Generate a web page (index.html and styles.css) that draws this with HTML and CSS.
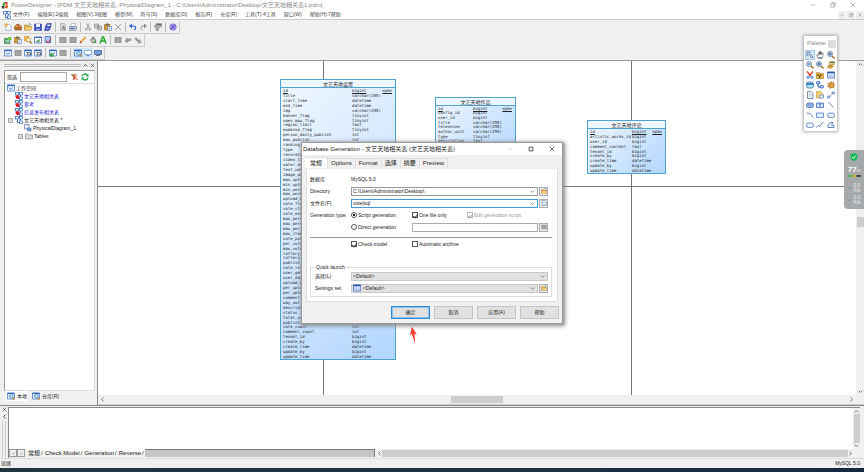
FILE: index.html
```html
<!DOCTYPE html>
<html lang="zh-CN">
<head>
<meta charset="utf-8">
<meta name="viewport" content="width=device-width, initial-scale=1">
<title>PowerDesigner</title>
<link rel="stylesheet" href="styles.css">
</head>
<body>
<svg class="sprite" aria-hidden="true">
  <symbol id="logo" viewBox="0 0 16 16"><path d="M2 9l3-7 4 3-2 5z" fill="#4aa84a"/><path d="M6 2h7v7l-3-2z" fill="#d8392f"/><path d="M9 8l5 1-1 6-5-1z" fill="#e0532f"/><path d="M1 10h6v5H2z" fill="#444"/></symbol>
  <symbol id="model" viewBox="0 0 16 16"><path d="M5 4v9h7M11 4v5" fill="none" stroke="#4b77b8" stroke-width="2"/><g fill="#fff" stroke="#2f66b5" stroke-width="1.4"><rect x="1" y="1" width="6" height="5"/><rect x="9" y="1" width="6" height="5"/><rect x="9" y="10" width="6" height="5"/></g></symbol>
  <symbol id="modelred" viewBox="0 0 16 16"><use href="#model"/><circle cx="5" cy="10" r="4" fill="#e01b1b"/></symbol>
  <symbol id="new" viewBox="0 0 16 16"><path d="M4 3h7l3 3v9H4z" fill="#fff" stroke="#667fa8"/><path d="M4 0v8M0 4h8M1 1l6 6M7 1L1 7" stroke="#e8a72a" stroke-width="1.5"/></symbol>
  <symbol id="box" viewBox="0 0 16 16"><path d="M1 6l7-4 7 4v8H2z" fill="#b5692a" stroke="#6e3c14"/><path d="M1 6h14" stroke="#f3c66b" stroke-width="2"/><path d="M6 3l4 4" stroke="#d33" stroke-width="2"/></symbol>
  <symbol id="folder" viewBox="0 0 16 16"><path d="M1 4h5l2 2h6v8H1z" fill="#eab54a" stroke="#a0721d"/><path d="M4 8h12l-3 6H1z" fill="#ffe08a" stroke="#b98622"/><path d="M9 3c2-3 5-1 5 1" fill="none" stroke="#3867b4" stroke-width="1.5"/></symbol>
  <symbol id="save" viewBox="0 0 16 16"><path d="M1 2h14v13H1z" fill="#3b4fc4" stroke="#22307e"/><path d="M4 2h8v6H4z" fill="#e8edff"/><path d="M5 11h6v4H5z" fill="#aab4ea"/></symbol>
  <symbol id="saveall" viewBox="0 0 16 16"><path d="M6 1h9l-3 11-2 3H1l3-11z" fill="#3b4fc4" stroke="#22307e"/><path d="M7 3h6l-1 3H6z" fill="#e8edff"/><path d="M5 9h5l-1 4H4z" fill="#8794e2"/></symbol>
  <symbol id="preview" viewBox="0 0 16 16"><path d="M3 1h8l2 3v11H3z" fill="#ddd" stroke="#888"/><path d="M5 12l4-8 5 10z" fill="#8a8a8a"/></symbol>
  <symbol id="print" viewBox="0 0 16 16"><path d="M5 1h8l-2 6H3z" fill="#fff" stroke="#7d8da6"/><path d="M1 7h14v6l-3 2H1z" fill="#b7c8e0" stroke="#526789"/><path d="M3 11h8" stroke="#345" stroke-width="1.5"/></symbol>
  <symbol id="cut" viewBox="0 0 16 16"><path d="M5 1l5 9M11 1L6 10" stroke="#888" stroke-width="1.6"/><g fill="none" stroke="#888" stroke-width="1.6"><circle cx="4.500" cy="12.500" r="2"/><circle cx="11.500" cy="12.500" r="2"/></g></symbol>
  <symbol id="redcut" viewBox="0 0 16 16"><path d="M2 1l8 9M14 1L6 10" stroke="#e03a2a" stroke-width="2.4"/><g fill="none" stroke="#2a80d8" stroke-width="2"><circle cx="4" cy="12.500" r="2.200"/><circle cx="12" cy="12.500" r="2.200"/></g></symbol>
  <symbol id="copy" viewBox="0 0 16 16"><g fill="#d5d5d5" stroke="#888" stroke-width="1.4"><path d="M1 2h8v8H1zM7 6h8v8H7z"/></g><path d="M9 9h4M9 11h4M3 5h4" stroke="#888"/></symbol>
  <symbol id="paste" viewBox="0 0 16 16"><path d="M1 3h11v11H1z" fill="#d79a2c" stroke="#7c5514"/><path d="M4 1h5v4H4z" fill="#666"/><path d="M7 7h8v8H7z" fill="#fff" stroke="#3c62b0"/><path d="M9 10h4M9 12h4" stroke="#3c62b0"/></symbol>
  <symbol id="del" viewBox="0 0 16 16"><path d="M2 2l12 12M14 2L2 14" stroke="#8a8a8a" stroke-width="1.6"/></symbol>
  <symbol id="undo" viewBox="0 0 16 16"><path d="M3 6h6c6 0 5 7 1 8" fill="none" stroke="#2f62d0" stroke-width="2.4"/><path d="M0 6l6-5v10z" fill="#2f62d0"/></symbol>
  <symbol id="redo" viewBox="0 0 16 16"><path d="M13 6H8c-6 0-5 7-1 8" fill="none" stroke="#8c8c8c" stroke-width="2"/><path d="M16 6l-6-5v10z" fill="#8c8c8c"/></symbol>
  <symbol id="props" viewBox="0 0 16 16"><path d="M4 1h11v7H9v7H4V8H1V5h3z" fill="#aaa" stroke="#777"/><path d="M5 3h10" stroke="#666" stroke-width="2"/></symbol>
  <symbol id="help" viewBox="0 0 16 16"><circle cx="8" cy="8" r="7" fill="#7d6cd8"/><path d="M8 1v14M1 8h14M3 3l10 10" stroke="#d9d3ff"/><circle cx="8" cy="8" r="2" fill="#4530b8"/></symbol>
  <symbol id="green" viewBox="0 0 16 16"><path d="M1 5h11v10H1z" fill="#49a35a" stroke="#23653a"/><path d="M3 9h8M3 12h8" stroke="#cfe9ff" stroke-width="1.5"/><path d="M8 2h7v6H8z" fill="#75c24d"/></symbol>
  <symbol id="find" viewBox="0 0 16 16"><path d="M1 1h9l-2 9H1z" fill="#f5c04c" stroke="#b27a1a"/><circle cx="9" cy="8" r="4" fill="#fff" stroke="#ce8a1c" stroke-width="1.500"/><path d="M11 11l4 4" stroke="#9c6a1a" stroke-width="2.500"/></symbol>
  <symbol id="image" viewBox="0 0 16 16"><path d="M1 2h14v12H1z" fill="#fff" stroke="#3462b8" stroke-width="1.500"/><path d="M1 3h14" stroke="#3462b8" stroke-width="2"/><path d="M3 12l8-6v6z" fill="#37963d"/></symbol>
  <symbol id="check" viewBox="0 0 16 16"><path d="M2 1h11v12H2z" fill="#a9c6f2" stroke="#3f6dbe" stroke-width="1.500"/><path d="M5 9l3 5 6-9" fill="none" stroke="#db3030" stroke-width="2"/><path d="M8 15l6-2V8z" fill="#3f6dbe"/></symbol>
  <symbol id="gray" viewBox="0 0 16 16"><path d="M1 2h14v12H1z" fill="#999"/><path d="M4 6h8M4 9h8M4 12h5" stroke="#bbb"/></symbol>
  <symbol id="pencil" viewBox="0 0 16 16"><path d="M1 15l2-5L12 1l3 2-9 9z" fill="#e4a52b"/><path d="M1 15l2-5 3 3z" fill="#d23a2a"/></symbol>
  <symbol id="fill" viewBox="0 0 16 16"><path d="M3 8l6-6 5 7-6 5z" fill="#ccc" stroke="#333" stroke-width="1.300"/><path d="M8 1v7" stroke="#333"/><path d="M12 8l3 5-4 2z" fill="#2b9a3a"/></symbol>
  <symbol id="font" viewBox="0 0 16 16"><path d="M2 15L7 2h2l5 13M4 10h8" fill="none" stroke="#19ad2d" stroke-width="3"/></symbol>
  <symbol id="arrowg" viewBox="0 0 16 16"><path d="M1 11l5-8 2 3 6-2 1 5-6 2-2 3z" fill="#999"/></symbol>
  <symbol id="arrowh" viewBox="0 0 16 16"><path d="M1 3l5 1 3 4 3-2 3 8-8 1 1-3-5-4z" fill="#999"/></symbol>
  <symbol id="frame" viewBox="0 0 16 16"><path d="M1 2h14v12H1z" fill="#edf5ff" stroke="#4d7dc6" stroke-width="1.600"/><path d="M1 3h14" stroke="#2f62b8" stroke-width="2.500"/><path d="M4 7l3 4 5-4" fill="none" stroke="#2f62b8" stroke-width="1.500"/></symbol>
  <symbol id="frames" viewBox="0 0 16 16"><path d="M1 2h14v12H1z" fill="#edf5ff" stroke="#4d7dc6" stroke-width="1.600"/><path d="M1 3h14" stroke="#2f62b8" stroke-width="2.500"/><path d="M5 7h3v5H5M10 7h3v5h-3" fill="none" stroke="#333" stroke-width="1.500"/></symbol>
  <symbol id="greenframe" viewBox="0 0 16 16"><use href="#frame"/><path d="M1 9h8v6H1z" fill="#3ca447"/></symbol>
  <symbol id="screen" viewBox="0 0 16 16"><path d="M1 3h14v8H1z" fill="#fff" stroke="#7da0cf" stroke-width="1.500"/><path d="M5 13h6" stroke="#5b86bf" stroke-width="2"/></symbol>
  <symbol id="screenblue" viewBox="0 0 16 16"><path d="M1 3h14v8H1z" fill="#7ca0dc" stroke="#3b5c96" stroke-width="1.500"/><path d="M4 13h8" stroke="#777" stroke-width="2"/></symbol>
  <symbol id="browse" viewBox="0 0 16 16"><use href="#frame"/><circle cx="9" cy="9" r="3.500" fill="#cfe8fa" stroke="#277fb5" stroke-width="1.500"/><path d="M11 11l4 4" stroke="#c78324" stroke-width="2.500"/></symbol>
  <symbol id="pointer" viewBox="0 0 16 16"><path d="M2 2h6L7 5l7 7-2 2-7-7-3 2z" fill="#dceafa" stroke="#385170" stroke-width="1.300"/></symbol>
  <symbol id="hand" viewBox="0 0 16 16"><path d="M4 14L1 8l2-1 2 2V3h2v4-6h2v6-5h2v5l1-3h2v6l-2 5z" fill="#fff" stroke="#333"/><path d="M4 14h8" stroke="#3866a8" stroke-width="2"/></symbol>
  <symbol id="zoom" viewBox="0 0 16 16"><circle cx="6" cy="6" r="5" fill="#d9e9fb" stroke="#61758f" stroke-width="1.500"/><path d="M10 10l5 5" stroke="#a77524" stroke-width="3"/><path d="M3 6h6" stroke="#284f92" stroke-width="2"/></symbol>
  <symbol id="zoomplus" viewBox="0 0 16 16"><use href="#zoom"/><path d="M6 3v6" stroke="#284f92" stroke-width="2"/></symbol>
  <symbol id="handprop" viewBox="0 0 16 16"><path d="M5 1h10v6H5z" fill="#f1d56a" stroke="#8a742c"/><path d="M1 9l7-2 6 3-5 5H1z" fill="#c69a39"/><path d="M7 3h7" stroke="#3465aa" stroke-width="2"/></symbol>
  <symbol id="package" viewBox="0 0 16 16"><path d="M1 3h5l1 2h8v10H1z" fill="#e8b93d" stroke="#8d681a"/><path d="M3 7h3v3H3zM8 7h3v3H8zM6 11h3v3H6z" fill="#4b3515"/></symbol>
  <symbol id="table" viewBox="0 0 16 16"><path d="M1 2h14v12H1z" fill="#dce9ff" stroke="#3e64ae" stroke-width="1.400"/><path d="M1 3h14" stroke="#2c57ad" stroke-width="3"/><path d="M1 8h14M1 11h14M6 4v10" stroke="#93b2e4"/></symbol>
  <symbol id="view" viewBox="0 0 16 16"><rect x="1" y="2" width="14" height="12" rx="4" fill="#a8e1f2" stroke="#2c7aa6" stroke-width="1.500"/><path d="M1 6h14" stroke="#2765bd" stroke-width="3"/></symbol>
  <symbol id="ref" viewBox="0 0 16 16"><path d="M4 5v7h8" fill="none" stroke="#315cae" stroke-width="2"/><rect x="1" y="1" width="7" height="5" rx="2" fill="#9ac0f4" stroke="#315cae" stroke-width="1.500"/><rect x="8" y="9" width="7" height="5" rx="2" fill="#9ac0f4" stroke="#315cae" stroke-width="1.500"/></symbol>
  <symbol id="gear" viewBox="0 0 16 16"><path d="M8 1l2 3 4-1-1 4 3 2-3 2v3l-4-1-3 2-1-3-4-1 2-3-1-4 4 1z" fill="#dc9b38" stroke="#8d5718"/></symbol>
  <symbol id="file" viewBox="0 0 16 16"><path d="M3 1h7l4 4v10H3z" fill="#eaf1fb" stroke="#60758f" stroke-width="1.600"/><path d="M6 7h5M6 10h5" stroke="#9bacc4"/></symbol>
  <symbol id="note" viewBox="0 0 16 16"><path d="M1 1h8l5 6v7H1z" fill="#f8d471" stroke="#a77b25"/><path d="M7 8h8v6H7z" fill="#dbe6f8" stroke="#496ca7"/></symbol>
  <symbol id="link" viewBox="0 0 16 16"><path d="M4 12l8-8" stroke="#5875bd" stroke-width="1.500" stroke-dasharray="2 1"/><path d="M1 10h5v4H1zM10 2h5v4h-5z" fill="#b7c7ef" stroke="#4163b2"/></symbol>
  <symbol id="cyl" viewBox="0 0 16 16"><rect x="1" y="4" width="14" height="9" rx="4" fill="#9cbbf0" stroke="#375da9" stroke-width="1.500"/><path d="M4 8h8" stroke="#375da9"/></symbol>
  <symbol id="textbox" viewBox="0 0 16 16"><path d="M1 4h14v9H1z" fill="#d2e2ff" stroke="#375da9" stroke-width="1.500"/><path d="M8 5v7M5 6h6" stroke="#375da9" stroke-width="1.500"/></symbol>
  <symbol id="line" viewBox="0 0 16 16"><path d="M3 2l10 11" stroke="#4263a5" stroke-width="1.500"/></symbol>
  <symbol id="arc" viewBox="0 0 16 16"><path d="M1 4c6 0 11 3 13 9" fill="none" stroke="#4263a5" stroke-width="1.500"/></symbol>
  <symbol id="rect" viewBox="0 0 16 16"><path d="M1 4h14v9H1z" fill="#e5efff" stroke="#4a73c4" stroke-width="1.500"/></symbol>
  <symbol id="round" viewBox="0 0 16 16"><rect x="1" y="4" width="14" height="9" rx="4" fill="#e5efff" stroke="#4a73c4" stroke-width="1.500"/></symbol>
  <symbol id="poly" viewBox="0 0 16 16"><path d="M1 13l3-4 4 2 4-7 3-1" fill="none" stroke="#4263a5" stroke-width="1.500"/></symbol>
  <symbol id="polygon" viewBox="0 0 16 16"><path d="M2 13V8l4-5h6l-3 5 5 1v4z" fill="#e5efff" stroke="#4263a5" stroke-width="1.500"/></symbol>
  <symbol id="clearfilter" viewBox="0 0 16 16"><path d="M1 2h12L9 8v6l-3-2V8z" fill="#b98b58"/><path d="M6 5l9 9M14 5l-8 9" stroke="#e63222" stroke-width="2"/></symbol>
  <symbol id="refresh" viewBox="0 0 16 16"><path d="M2 7c1-6 8-6 10-3M14 9c-1 6-8 6-10 3" fill="none" stroke="#27a04a" stroke-width="2.600"/><path d="M15 1v6H9zM1 15V9h6z" fill="#27a04a"/></symbol>
  <symbol id="grayfolder" viewBox="0 0 16 16"><path d="M1 4h5l2 2h7v8H1z" fill="#ddd" stroke="#888" stroke-width="1.400"/></symbol>
  <symbol id="diagram" viewBox="0 0 16 16"><path d="M1 1h9v9H1z" fill="#e9f1ff" stroke="#667eaa" stroke-width="1.500"/><path d="M7 8h7v6H7z" fill="#79a9e2" stroke="#315c9d"/></symbol>
  <symbol id="min" viewBox="0 0 16 16"><path d="M2 8h12" stroke="currentColor" stroke-width="1.500"/></symbol>
  <symbol id="max" viewBox="0 0 16 16"><path d="M3 3h10v10H3z" fill="none" stroke="currentColor" stroke-width="2"/></symbol>
  <symbol id="restore" viewBox="0 0 16 16"><path d="M2 5h9v9H2zM5 5V2h9v9h-3" fill="none" stroke="currentColor" stroke-width="1.500"/></symbol>
  <symbol id="close" viewBox="0 0 16 16"><path d="M2 2l12 12M14 2L2 14" stroke="currentColor" stroke-width="1.700"/></symbol>
  <symbol id="down" viewBox="0 0 16 16"><path d="M2 5l6 6 6-6" fill="none" stroke="currentColor" stroke-width="2.500"/></symbol>
  <symbol id="up" viewBox="0 0 16 16"><path d="M2 11l6-6 6 6" fill="none" stroke="currentColor" stroke-width="2.500"/></symbol>
  <symbol id="left" viewBox="0 0 16 16"><path d="M11 2L5 8l6 6" fill="none" stroke="currentColor" stroke-width="2.500"/></symbol>
  <symbol id="right" viewBox="0 0 16 16"><path d="M5 2l6 6-6 6" fill="none" stroke="currentColor" stroke-width="2.500"/></symbol>
</svg>

<div class="app">
  <header class="titlebar">
    <svg class="icon"><use href="#logo"/></svg>
    <span class="grow">PowerDesigner - [PDM 文艺天地相关表, PhysicalDiagram_1 - C:\Users\Administrator\Desktop\文艺天地相关表1.pdm]</span>
    <div class="winbtns">
      <button aria-label="最小化"><svg><use href="#min"/></svg></button>
      <button aria-label="还原"><svg><use href="#restore"/></svg></button>
      <button aria-label="关闭"><svg><use href="#close"/></svg></button>
    </div>
  </header>
  <nav class="menubar">
    <svg class="icon"><use href="#model"/></svg>
    <div class="menus">
      <button>文件(F)</button><button>编辑(E):2编辑</button><button>视图(V):3视图</button><button>模型(M)</button><button>符号(S)</button><button>数据库(D)</button><button>报告(R)</button><button>仓库(R)</button><button>工具(T):4工具</button><button>窗口(W)</button><button>帮助(H):7帮助</button>
    </div>
    <div class="mdi">
      <button aria-label="最小化"><svg><use href="#min"/></svg></button>
      <button aria-label="还原"><svg><use href="#restore"/></svg></button>
      <button aria-label="关闭"><svg><use href="#close"/></svg></button>
    </div>
  </nav>
  <div class="toolbars" id="toolbars"></div>

  <main class="work">
    <aside class="browser">
      <div class="grip"><i></i><svg><use href="#up"/></svg><svg><use href="#close"/></svg></div>
      <div class="browser-box">
        <div class="filter">
          <label for="filter">筛选</label><input id="filter" type="text">
          <svg class="icon"><use href="#clearfilter"/></svg><svg class="icon"><use href="#refresh"/></svg>
        </div>
        <ul class="tree">
          <li><svg class="icon"><use href="#frame"/></svg>工作空间</li>
          <li class="l1 blue"><svg class="icon"><use href="#modelred"/></svg>文艺天地相关表</li>
          <li class="l1 blue"><svg class="icon"><use href="#modelred"/></svg>参考</li>
          <li class="l1 blue"><svg class="icon"><use href="#modelred"/></svg>信息发布相关表</li>
          <li><i class="exp"></i><svg class="icon"><use href="#model"/></svg>文艺天地相关表 *</li>
          <li class="l3"><svg class="icon"><use href="#diagram"/></svg>PhysicalDiagram_1</li>
          <li class="l2"><i class="exp"></i><svg class="icon"><use href="#grayfolder"/></svg>Tables</li>
        </ul>
      </div>
      <div class="browser-tabs">
        <button class="on"><svg class="icon"><use href="#browse"/></svg>本地</button>
        <button><svg class="icon"><use href="#browse"/></svg>仓库(R)</button>
      </div>
    </aside>
    <section class="canvas-wrap">
      <div class="canvas" id="canvas">
        <i class="guide v g1"></i><i class="guide v g2"></i><i class="guide h"></i>
      </div>
      <div class="vscroll"><svg><use href="#up"/></svg><i></i><svg><use href="#down"/></svg></div>
      <div class="hscroll"><svg><use href="#left"/></svg><i></i><svg><use href="#right"/></svg></div>
    </section>
  </main>

  <section class="output">
    <div class="output-grip"><svg><use href="#close"/></svg><svg><use href="#left"/></svg><i></i></div>
    <div class="output-main">
      <div class="output-body">
        <div class="output-text"></div>
        <div class="outscroll"><svg><use href="#up"/></svg><i></i><svg><use href="#down"/></svg></div>
      </div>
      <div class="output-tabs">
        <div class="steps"><button aria-label="上一个"><svg><use href="#left"/></svg></button><button aria-label="下一个"><svg><use href="#right"/></svg></button></div>
        <button class="otab">常规</button><button class="otab">Check Model</button><button class="otab">Generation</button><button class="otab">Reverse</button>
        <i class="fillbar"></i>
        <div class="outh"><svg><use href="#left"/></svg><i></i><svg><use href="#right"/></svg></div>
      </div>
    </div>
  </section>
  <footer class="status"><span>就绪</span><span>MySQL 5.0</span></footer>
  <div class="taskbar"></div>
</div>

<section class="palette">
  <header><span>Palette</span><button aria-label="关闭"></button></header>
  <div class="palette-grid" id="palette"></div>
</section>

<section class="dialog" role="dialog" aria-labelledby="dlg-title">
  <header class="dlg-title">
    <h1 id="dlg-title">Database Generation - 文艺天地相关表 (文艺天地相关表)</h1>
    <div class="dlg-btns"><button class="off" aria-label="最小化"><svg><use href="#min"/></svg></button><button aria-label="最大化"><svg><use href="#max"/></svg></button><button aria-label="关闭"><svg><use href="#close"/></svg></button></div>
  </header>
  <div class="dlg-tabs"><button class="on">常规</button><button>Options</button><button>Format</button><button>选择</button><button>摘要</button><button>Preview</button></div>
  <div class="dlg-page">
    <div class="row"><span>数据库</span><span>MySQL 5.0</span></div>
    <div class="row"><label for="dir">Directory</label>
      <span class="combo"><select id="dir"><option>C:\Users\Administrator\Desktop\</option></select><svg><use href="#down"/></svg></span>
      <button class="tool" aria-label="浏览"><svg><use href="#folder"/></svg></button></div>
    <div class="row"><label for="fname">文件名(F)</label>
      <span class="combo focus"><input id="fname" type="text" value="vote|sql"><svg><use href="#down"/></svg></span>
      <button class="tool" aria-label="打开文件"><svg><use href="#file"/></svg></button></div>
    <div class="row"><span>Generation type:</span>
      <div class="opts"><label><input type="radio" name="gen" checked>Script generation</label><label><input type="checkbox" checked>One file only</label><label class="off"><input type="checkbox" checked disabled>Edit generation script</label></div></div>
    <div class="row"><span></span>
      <div class="opts direct"><label><input type="radio" name="gen">Direct generation</label><input class="conn" type="text" aria-label="连接" readonly></div>
      <button class="tool" aria-label="连接"><svg><use href="#gray"/></svg></button></div>
    <hr>
    <div class="row"><span></span><div class="opts"><label><input type="checkbox" checked>Check model</label><label><input type="checkbox">Automatic archive</label></div></div>
    <fieldset>
      <legend>Quick launch</legend>
      <div class="row"><label for="sel">选择(L)</label><span class="combo gray"><select id="sel"><option>&lt;Default&gt;</option></select><svg><use href="#down"/></svg></span></div>
      <div class="row"><label for="set">Settings set</label><span class="combo gray"><svg class="lead"><use href="#table"/></svg><select id="set"><option>&lt;Default&gt;</option></select><svg><use href="#down"/></svg></span>
        <button class="tool" aria-label="浏览"><svg><use href="#folder"/></svg></button></div>
    </fieldset>
  </div>
  <footer class="dlg-foot"><button class="primary">确定</button><button>取消</button><button>应用(A)</button><button>帮助</button></footer>
</section>

<svg class="pointer-arrow" viewBox="0 0 8 20"><path d="M2 0L8 9 5 8 6 20 2 8 0 10z" fill="#fb3a32"/></svg>

<aside class="monitor">
  <svg class="shield" viewBox="0 0 16 16"><path d="M8 0l7 3v5c0 4-3 7-7 8-4-1-7-4-7-8V3z" fill="#12b854"/><path d="M4 8l3 3 5-6" fill="none" stroke="#fff" stroke-width="2"/></svg>
  <strong>77<small>%</small></strong>
  <i></i>
  <p class="up"><svg><use href="#up"/></svg><span>0.0<br>K/s</span></p>
  <p class="dn"><svg><use href="#down"/></svg><span>0.0<br>K/s</span></p>
</aside>
<script src="app.js"></script>
</body>
</html>
```
FILE: styles.css
```css
* { box-sizing: border-box; }
html, body { height: 100%; }
body {
  margin: 0;
  overflow: hidden;
  font: 5px/7px "Liberation Sans", "Noto Sans CJK SC", sans-serif;
  color: #222;
  background: #f0f0f0;
}
button, input, select { font: inherit; color: inherit; margin: 0; padding: 0; border: 0; background: none; border-radius: 0; }
button { display: flex; align-items: center; justify-content: center; white-space: nowrap; }
ul, p, h1, fieldset, hr { margin: 0; padding: 0; border: 0; list-style: none; }
svg { display: block; flex: none; width: 6px; height: 6px; }
.icon { width: 8px; height: 8px; }
.sprite { position: absolute; width: 0; height: 0; }
.grow { flex: 1; }

.app { display: flex; flex-direction: column; height: 100vh; }

/* Window title and menus */
.titlebar { display: flex; align-items: center; gap: 2px; height: 10px; padding: 0 2px 0 1px; background: #fff; color: #888; font-size: 6px; white-space: nowrap; }
.winbtns { display: flex; gap: 2px; color: #888; }
.winbtns button { width: 18px; }
.menubar { display: flex; align-items: center; height: 10px; padding-left: 3px; background: #fff; border-bottom: 1px solid #ccc; color: #444; }
.menus { display: flex; gap: 8px; margin-left: 2px; flex: 1; }
.mdi { display: flex; gap: 1px; }
.mdi button { width: 8px; height: 8px; background: #eee; color: #667; }
.mdi svg { width: 4px; height: 4px; }

/* Toolbars */
.toolbars { display: flex; flex-direction: column; align-items: flex-start; height: 41px; padding-top: 1px; border-bottom: 1px solid #999; flex: none; }
.toolbar { display: flex; align-items: center; gap: 2px; height: 13px; padding: 0 2px 0 4px; border: solid #ccc; border-width: 0 1px 1px 0; }
.toolbar i { width: 1px; height: 10px; margin: 0 1px; background: #bbb; }
.toolbar button.on { background: #cfe4f7; outline: 1px solid #cfe4f7; }

/* Object browser */
.work { display: flex; flex: 1; min-height: 0; }
.browser { display: flex; flex-direction: column; width: 97px; padding-right: 2px; padding-left: 4px; }
.grip { display: flex; align-items: center; gap: 2px; height: 9px; }
.grip i { flex: 1; height: 3px; border: solid #bbb; border-width: 1px 0; }
.grip svg { width: 5px; height: 5px; }
.browser-box { flex: 1; background: #fff; border: 1px solid #999; border-right-color: #ddd; border-bottom-color: #ddd; }
.filter { display: flex; align-items: center; gap: 3px; height: 13px; padding-left: 2px; border-bottom: 1px solid #ddd; }
.filter input { width: 47px; height: 10px; border: 1px solid #aaa; background: #fff; }
.tree { display: grid; grid-auto-rows: 1fr; height: 51px; padding-left: 2px; }
.tree li { display: flex; align-items: center; gap: 1px; white-space: nowrap; }
.blue { color: #1515d0; }
.l1 { padding-left: 8px; }
.l2 { padding-left: 10px; }
.l3 { padding-left: 17px; }
.exp { width: 5px; height: 5px; margin: 0 1px; border: 1px solid #aaa; background: #ddd; }
.browser-tabs { display: flex; gap: 3px; height: 14px; padding: 0 2px 4px; }
.browser-tabs button { gap: 2px; padding: 0 1px; }
.browser-tabs .on { background: #fff; }

/* Diagram canvas */
.canvas-wrap { display: grid; flex: 1; grid-template: 1fr 9px / 1fr 8px; border-left: 1px solid #888; border-bottom: 1px solid #ccc; min-width: 0; }
.canvas { position: relative; overflow: hidden; background: #fff; }
.guide { position: absolute; background: #777; }
.guide.v { width: 1px; top: 0; bottom: 0; }
.guide.h { height: 1px; left: 0; right: 0; top: 125px; }
.g1 { left: 225px; }
.g2 { left: 533px; }
.entity { position: absolute; display: flex; flex-direction: column; border: 1px solid #4fa3cf; background: linear-gradient(135deg, #f0f7ff, #b2d6ff); font: 4px/5px "DejaVu Sans Mono", "Noto Sans CJK SC", monospace; }
.entity h2 { margin: 0; font: 5px/7px "Noto Sans CJK SC", sans-serif; text-align: center; border-bottom: 1px solid #4fa3cf; background: #eef7ff; }
.entity dl { flex: 1; display: grid; grid-auto-rows: 1fr; margin: 0; padding: 0 2px; min-height: 0; }
.entity dl div { display: flex; align-items: center; min-height: 0; white-space: nowrap; }
.entity dt { width: 69px; }
.entity dd { margin: 0; flex: 1; }
.entity dd + dd { flex: none; padding-right: 1px; }
.entity .key { text-decoration: underline; }
.e1 { left: 182px; top: 18px; width: 116px; height: 281px; }
.e2 { left: 337px; top: 36px; width: 81px; height: 70px; }
.e3 { left: 489px; top: 59px; width: 79px; height: 54px; }
.e2 dt { width: 35px; }
.e3 dt { width: 42px; }
.vscroll, .outscroll { display: flex; flex-direction: column; align-items: center; padding: 1px 0; color: #555; background: #f0f0f0; }
.vscroll i { width: 7px; height: 10px; margin: 150px 0 auto; background: #cdcdcd; }
.vscroll svg, .hscroll svg, .outscroll svg, .outh svg { width: 5px; height: 5px; }
.hscroll { display: flex; align-items: center; padding: 0 2px; color: #555; }
.hscroll i { width: 52px; height: 7px; margin: 0 auto; background: #cdcdcd; }

/* Output pane */
.output { display: flex; height: 54px; border-top: 1px solid #888; padding: 1px 4px 0 0; border-bottom: 1px solid #ddd; flex: none; }
.output-grip { display: flex; flex-direction: column; align-items: center; gap: 2px; width: 8px; }
.output-grip svg { width: 5px; height: 5px; }
.output-grip i { width: 4px; flex: 1; border: solid #ccc; border-width: 0 1px; }
.output-main { flex: 1; display: flex; flex-direction: column; border: 1px solid #888; border-width: 1px 0 0 1px; }
.output-body { flex: 1; display: flex; background: #fff; }
.output-text { flex: 1; }
.outscroll { width: 7px; }
.outscroll i { flex: 1; width: 6px; background: #cdcdcd; }
.output-tabs { display: flex; height: 9px; padding-bottom: 1px; font-size: 6px; }
.steps { display: flex; margin-right: 2px; }
.steps button { width: 8px; border: 1px solid #999; }
.steps svg { width: 3px; height: 3px; }
.otab { padding: 0 1px; background: linear-gradient(#fff, #eee); }
.otab::after { content: "/"; margin-left: 1px; }
.fillbar { width: 27%; background: #c6c6c6; border: 1px solid #777; border-width: 1px 1px 0 0; }
.outh { flex: 1; display: flex; align-items: center; padding: 0 7px 0 2px; color: #555; }
.outh i { flex: 1; height: 7px; background: #cdcdcd; }
.status { display: flex; justify-content: space-between; align-items: center; height: 9px; padding: 0 4px 0 1px; flex: none; }
.taskbar { height: 4px; background: linear-gradient(90deg, #20363f, #1f3442 45%, #182844); flex: none; }

/* Floating palette */
.palette { position: absolute; left: 804px; top: 36px; width: 33px; padding: 1px; background: #fff; box-shadow: 0 0 3px 1px #aaa; }
.palette header { display: flex; align-items: center; justify-content: space-between; height: 13px; padding-left: 2px; color: #888; }
.palette header button { width: 8px; height: 8px; background: #ddd; }
.palette header { font-size: 6px; }
.palette-grid { display: grid; grid-template-columns: repeat(3, 1fr); grid-auto-rows: 10px; }
.palette-grid button.on { background: #cfe4f7; outline: 1px solid #a9cdea; outline-offset: -1px; }

/* Database generation dialog */
.dialog { position: absolute; left: 301px; top: 142px; width: 262px; background: #f0f0f0; border: 1px solid #999; box-shadow: 1px 1px 4px 1px #888; }
.dlg-title { display: flex; align-items: center; height: 12px; padding-left: 1px; background: #fff; }
.dlg-title h1 { flex: 1; font-size: 6px; font-weight: normal; white-space: nowrap; }
.dlg-btns { display: flex; }
.dlg-btns button { width: 21px; }
.dlg-btns .off { color: #bbb; }
.dlg-tabs { display: flex; align-items: flex-end; height: 13px; padding: 2px 3px 0; font-size: 6px; }
.dlg-tabs button { height: 10px; padding: 0 3px; border: solid #ddd; border-width: 1px 1px 0 0; }
.dlg-tabs .on { height: 11px; padding: 0 5px; background: #fff; }
.dlg-page { margin: 0 4px; padding: 4px 5px 4px 3px; background: #fff; border: 1px solid #ddd; border-top-color: #eee; }
.row { display: grid; grid-template-columns: 40px 1fr 9px; column-gap: 1px; align-items: center; height: 12px; white-space: nowrap; padding-right: 4px; }
.row > :nth-child(2):last-child { grid-column: 2 / 4; }
.combo { display: flex; align-items: center; height: 9px; padding: 0 2px 0 1px; border: 1px solid #999; background: #fff; }
.combo select, .combo input { flex: 1; min-width: 0; height: 7px; appearance: none; outline: 0; }
.combo svg { width: 5px; height: 5px; color: #777; }
.combo .lead { width: 8px; height: 8px; margin-right: 2px; }
.combo.focus { border-color: #3d9be0; }
.combo.gray { background: #e1e1e1; border-color: #c8c8c8; }
.tool { width: 9px; height: 9px; border: 1px solid #aaa; background: #eee; }
.opts { display: grid; grid-template-columns: 61px 55px 1fr; align-items: center; }
.opts.direct { grid-template-columns: 61px 1fr; }
.opts label { display: flex; align-items: center; gap: 1px; }
.opts label input { appearance: none; display: grid; place-items: center; width: 6px; height: 6px; border: 1px solid #555; background: #fff; }
.opts input[type="radio"] { border-radius: 50%; }
.opts input[type="radio"]:checked { background: radial-gradient(circle, #222 45%, #fff 55%); }
.opts label input[type="checkbox"]:checked::before { content: ""; width: 2px; height: 4px; border: solid #444; border-width: 0 1px 1px 0; transform: rotate(40deg); }
.opts .off { color: #999; }
.opts .off input { border-color: #bbb; }
.opts .off input[type="checkbox"]:checked::before { border-color: #aaa; }
.conn { height: 9px; border: 1px solid #aaa; background: #fff; }
hr { height: 1px; margin: 4px 0 0; background: #999; }
fieldset { margin-top: 16px; padding: 2px 0 2px; border: 1px solid #ddd; min-width: 0; }
legend { padding: 0 1px; margin-left: 4px; height: 2px; line-height: 2px; }
fieldset .row { grid-template-columns: 35px 1fr 9px; padding: 0 3px 0 4px; }
.dlg-foot { display: flex; justify-content: flex-end; gap: 4px; padding: 4px 3px; }
.dlg-foot button { width: 39px; height: 13px; background: #e1e1e1; border: 1px solid #c4c4c4; }
.dlg-foot .primary { border: 1px solid #2d8ad8; outline: 1px solid #8cc0ea; outline-offset: -2px; }

.pointer-arrow { position: absolute; left: 410px; top: 326px; width: 7px; height: 19px; }

/* Desktop network monitor */
.monitor { position: absolute; right: 0; top: 150px; width: 20px; height: 59px; display: flex; flex-direction: column; align-items: center; padding-top: 3px; border-radius: 4px 0 0 4px; background: #a6a9ab; color: #eee; }
.monitor .shield { width: 8px; height: 8px; }
.monitor strong { margin-top: 5px; font-size: 8px; line-height: 8px; color: #fff; }
.monitor small { font-size: 4px; font-weight: normal; }
.monitor i { width: 13px; height: 2px; margin-bottom: 5px; background: linear-gradient(90deg, #27b45a, #e3b32d 60%, #444 70%); }
.monitor p { display: flex; align-items: center; gap: 2px; height: 12px; line-height: 5px; }
.monitor p svg { width: 4px; height: 4px; }
.up svg { color: #2d91d0; }
.dn svg { color: #28a95a; }
```
FILE: app.js
```js
const icon = (name) => `<svg class="icon"><use href="#${name}"/></svg>`;

// Toolbar rows: "|" is a separator, a trailing "*" marks a pressed button.
const toolbars = [
  "new box folder save saveall | preview print | cut copy paste del | undo redo | props | help",
  "green paste find image check | gray gray pencil fill font | gray arrowg arrowh",
  "frame gray frames frames | greenframe gray | browse* screen* screenblue",
];
const button = (n) =>
  `<button aria-label="${n.replace("*", "")}"${n.endsWith("*") ? ' class="on"' : ""}>${icon(n.replace("*", ""))}</button>`;

document.getElementById("toolbars").innerHTML = toolbars
  .map((t) => `<div class="toolbar">${t.split(" ").map((n) => (n === "|" ? "<i></i>" : button(n))).join("")}</div>`)
  .join("");

document.getElementById("palette").innerHTML =
  "pointer* hand zoomplus zoom zoomplus handprop redcut package table view ref gear file note link cyl textbox line arc rect round round poly polygon"
    .split(" ").map(button).join("");

// Each column is "name type"; the first one is the primary key.
const entities = [
  ["e1", "文艺天地设置", "id bigint,title varchar(255),start_time datetime,end_time datetime,img varchar(255),banner_flag tinyint,open_mpu_flag tinyint,region_limit text,examine_flag tinyint,person_daily_publish int,max_publish int,ranking_,type,recording,video_li,water_ma,text_wat,image_wa,max_uplo,min_uplo,min_word,max_word,upload_w,vote_flag,vote_sta,vote_end,max_pers,max_pers,max_per_,max_item,vote_poi,per_vote,max_vote,lottery_,lottery_,publish_,vote_lot,user_get,user_dai,upload_p,per_uplo,per_uplo,comment_,way_out,descript,status,total_co,publish_,vote_count int,comment_count int,tenant_id bigint,create_by bigint,create_time datetime,update_by bigint,update_time datetime"],
  ["e2", "文艺天地作品", "id bigint,config_id bigint,user_id bigint,title varchar(255),telennine varchar(255),author_unit varchar(255),type tinyint,description text,,,,,"],
  ["e3", "文艺天地评论", "id bigint,artistic_works_id bigint,user_id bigint,comment_content text,tenant_id bigint,create_by bigint,create_time datetime,update_by bigint,update_time datetime"],
];
document.getElementById("canvas").insertAdjacentHTML("beforeend", entities.map(([cls, title, cols]) => {
  const rows = cols.split(",").map((c, i) => {
    const [name, type = ""] = c.split(" ");
    return i === 0
      ? `<div><dt><span class="key">${name}</span></dt><dd><span class="key">${type}</span></dd><dd class="key">&lt;pk&gt;</dd></div>`
      : `<div><dt>${name}</dt><dd>${type}</dd></div>`;
  });
  return `<article class="entity ${cls}"><h2>${title}</h2><dl>${rows.join("")}</dl></article>`;
}).join(""));
```
